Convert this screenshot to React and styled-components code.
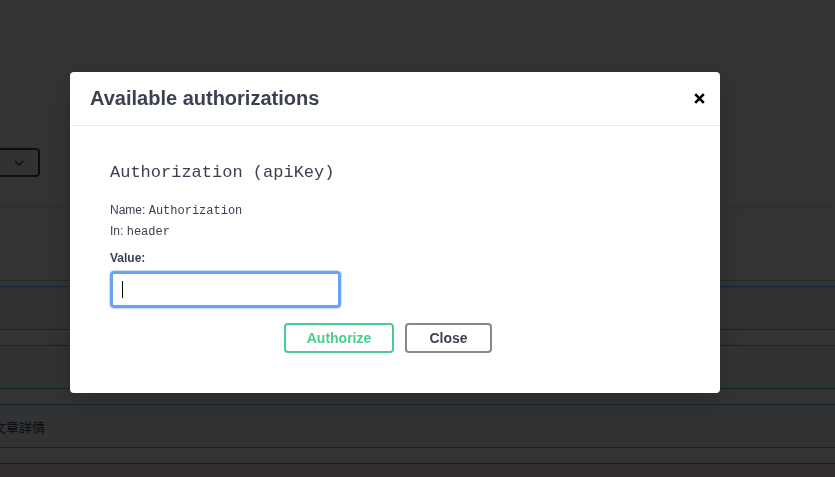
import styled, { createGlobalStyle } from "styled-components"

const GlobalStyle = createGlobalStyle`
    html, body {
        margin: 0;
        padding: 0;
        background: #fff;
        overflow: hidden;
    }
    body {
        font-family: "Liberation Sans", Arial, sans-serif;
        color: #3b4151;
    }
`

// page that sits under the dark overlay, scrolled a little to the right like the original
const Page = styled.div`
    width: 100%;
    height: 100vh;
    background: #fff;
    overflow: hidden;
`

const SchemeBar = styled.div`
    padding: 148px 0 30px;
    box-shadow: 0 1px 2px 0 rgba(0, 0, 0, 0.15);
`

const Select = styled.div`
    width: 100px;
    height: 29px;
    margin-left: -60px;
    box-sizing: border-box;
    border: 2px solid #41444e;
    border-radius: 4px;
    background: #f7f7f7;
    display: flex;
    align-items: center;
    justify-content: flex-end;
    padding-right: 14px;
`

const Operations = styled.div`
    margin-left: -60px;
    width: calc(100% + 120px);
`

const TagHeader = styled.div`
    height: 73px;
    border-bottom: 1px solid rgba(59, 65, 81, 0.3);
    margin-bottom: 5px;
`

const methodColors = {
    get: ["#61affe", "rgba(97,175,254,.08)"],
    post: ["#49cc90", "rgba(73,204,144,.08)"],
    delete: ["#f93e3e", "rgba(249,62,62,.1)"],
}

const OpBlock = styled.div`
    height: 44px;
    box-sizing: border-box;
    margin-bottom: 15px;
    border: 1px solid ${p => methodColors[p.$method][0]};
    border-radius: 4px;
    background: ${p => methodColors[p.$method][1]};
    display: flex;
    align-items: center;
    padding-left: 52px;
`

const Summary = styled.span`
    font-family: "Noto Sans CJK TC", "Noto Sans CJK SC", sans-serif;
    font-size: 13px;
    color: #3b4151;
`

// dark backdrop over the page
const Backdrop = styled.div`
    position: fixed;
    inset: 0;
    background: rgba(0, 0, 0, 0.8);
    padding: 72px 0 0 70px;
    box-sizing: border-box;
`

const Modal = styled.div`
    width: 650px;
    background: #fff;
    border-radius: 4px;
    box-shadow: 0 10px 30px 0 rgba(0, 0, 0, 0.2);
`

const ModalHeader = styled.div`
    height: 53px;
    border-bottom: 1px solid #ebebeb;
    display: flex;
    align-items: center;
    justify-content: space-between;
    padding: 0 15px 0 20px;
`

const ModalTitle = styled.h3`
    margin: 0;
    font-size: 20px;
    font-weight: 700;
    color: #3b4151;
`

const CloseIcon = styled.button`
    border: none;
    background: none;
    padding: 0;
    display: flex;
    cursor: pointer;
`

const ModalBody = styled.div`
    padding: 37px 54px 40px 40px;
`

const AuthTitle = styled.h4`
    margin: 0;
    font-family: "Liberation Mono", monospace;
    font-size: 17px;
    line-height: 20px;
    font-weight: 400;
    color: #3b4151;
`

const InfoRow = styled.div`
    margin-top: ${p => p.$gap}px;
    height: 16px;
    font-size: 12px;
    line-height: 16px;
    color: #3b4151;
    font-weight: ${p => (p.$bold ? 700 : 400)};
`

const Code = styled.code`
    font-family: "Liberation Mono", monospace;
    font-size: 12px;
    line-height: 16px;
`

const InputFrame = styled.div`
    margin-top: 5px;
    width: 231px;
    height: 37px;
    box-sizing: border-box;
    border: 3px solid #6aa1f4;
    border-radius: 4px;
    box-shadow: 0 0 1px 1px rgba(106, 161, 244, 0.35);
    display: flex;
    align-items: center;
    padding-left: 9px;
`

const Caret = styled.span`
    width: 1px;
    height: 17px;
    background: #000;
`

const Input = styled.input`
    flex: 1;
    min-width: 0;
    border: none;
    outline: none;
    background: transparent;
    font-size: 13px;
    caret-color: transparent;
`

const ButtonRow = styled.div`
    margin-top: 15px;
    display: flex;
    justify-content: center;
    gap: 11px;
`

const Btn = styled.button`
    width: ${p => p.$w}px;
    height: 30px;
    box-sizing: border-box;
    padding: 0;
    border: 2px solid ${p => (p.$primary ? "#49cc90" : "#888")};
    border-radius: 4px;
    background: #fff;
    color: ${p => (p.$primary ? "#49cc90" : "#3b4151")};
    font-family: "Liberation Sans", Arial, sans-serif;
    font-size: 14px;
    font-weight: 700;
    cursor: pointer;
`

const App = () => {
    return (
        <>
            <GlobalStyle />
            <Page>
                <SchemeBar>
                    <Select>
                        <svg width="10" height="6" viewBox="0 0 10 6">
                            <path d="M1 1l4 4 4-4" fill="none" stroke="#41444e" strokeWidth="1.5" />
                        </svg>
                    </Select>
                </SchemeBar>
                <Operations>
                    <TagHeader />
                    <OpBlock $method="get" />
                    <OpBlock $method="post" />
                    <OpBlock $method="get">
                        <Summary>文章詳情</Summary>
                    </OpBlock>
                    <OpBlock $method="delete" />
                </Operations>
            </Page>
            <Backdrop>
                <Modal>
                    <ModalHeader>
                        <ModalTitle>Available authorizations</ModalTitle>
                        <CloseIcon aria-label="Close">
                            <svg width="11" height="11" viewBox="0 0 11 11">
                                <path d="M1.2 1.2l8.6 8.6M9.8 1.2l-8.6 8.6" stroke="#000" strokeWidth="2.6" />
                            </svg>
                        </CloseIcon>
                    </ModalHeader>
                    <ModalBody>
                        <AuthTitle>Authorization (apiKey)</AuthTitle>
                        <InfoRow $gap={19}>Name: <Code>Authorization</Code></InfoRow>
                        <InfoRow $gap={5}>In: <Code>header</Code></InfoRow>
                        <InfoRow $gap={11} $bold>Value:</InfoRow>
                        <InputFrame>
                            <Caret />
                            <Input type="text" />
                        </InputFrame>
                        <ButtonRow>
                            <Btn $primary $w={110}>Authorize</Btn>
                            <Btn $w={87}>Close</Btn>
                        </ButtonRow>
                    </ModalBody>
                </Modal>
            </Backdrop>
        </>
    )
}

export default App
